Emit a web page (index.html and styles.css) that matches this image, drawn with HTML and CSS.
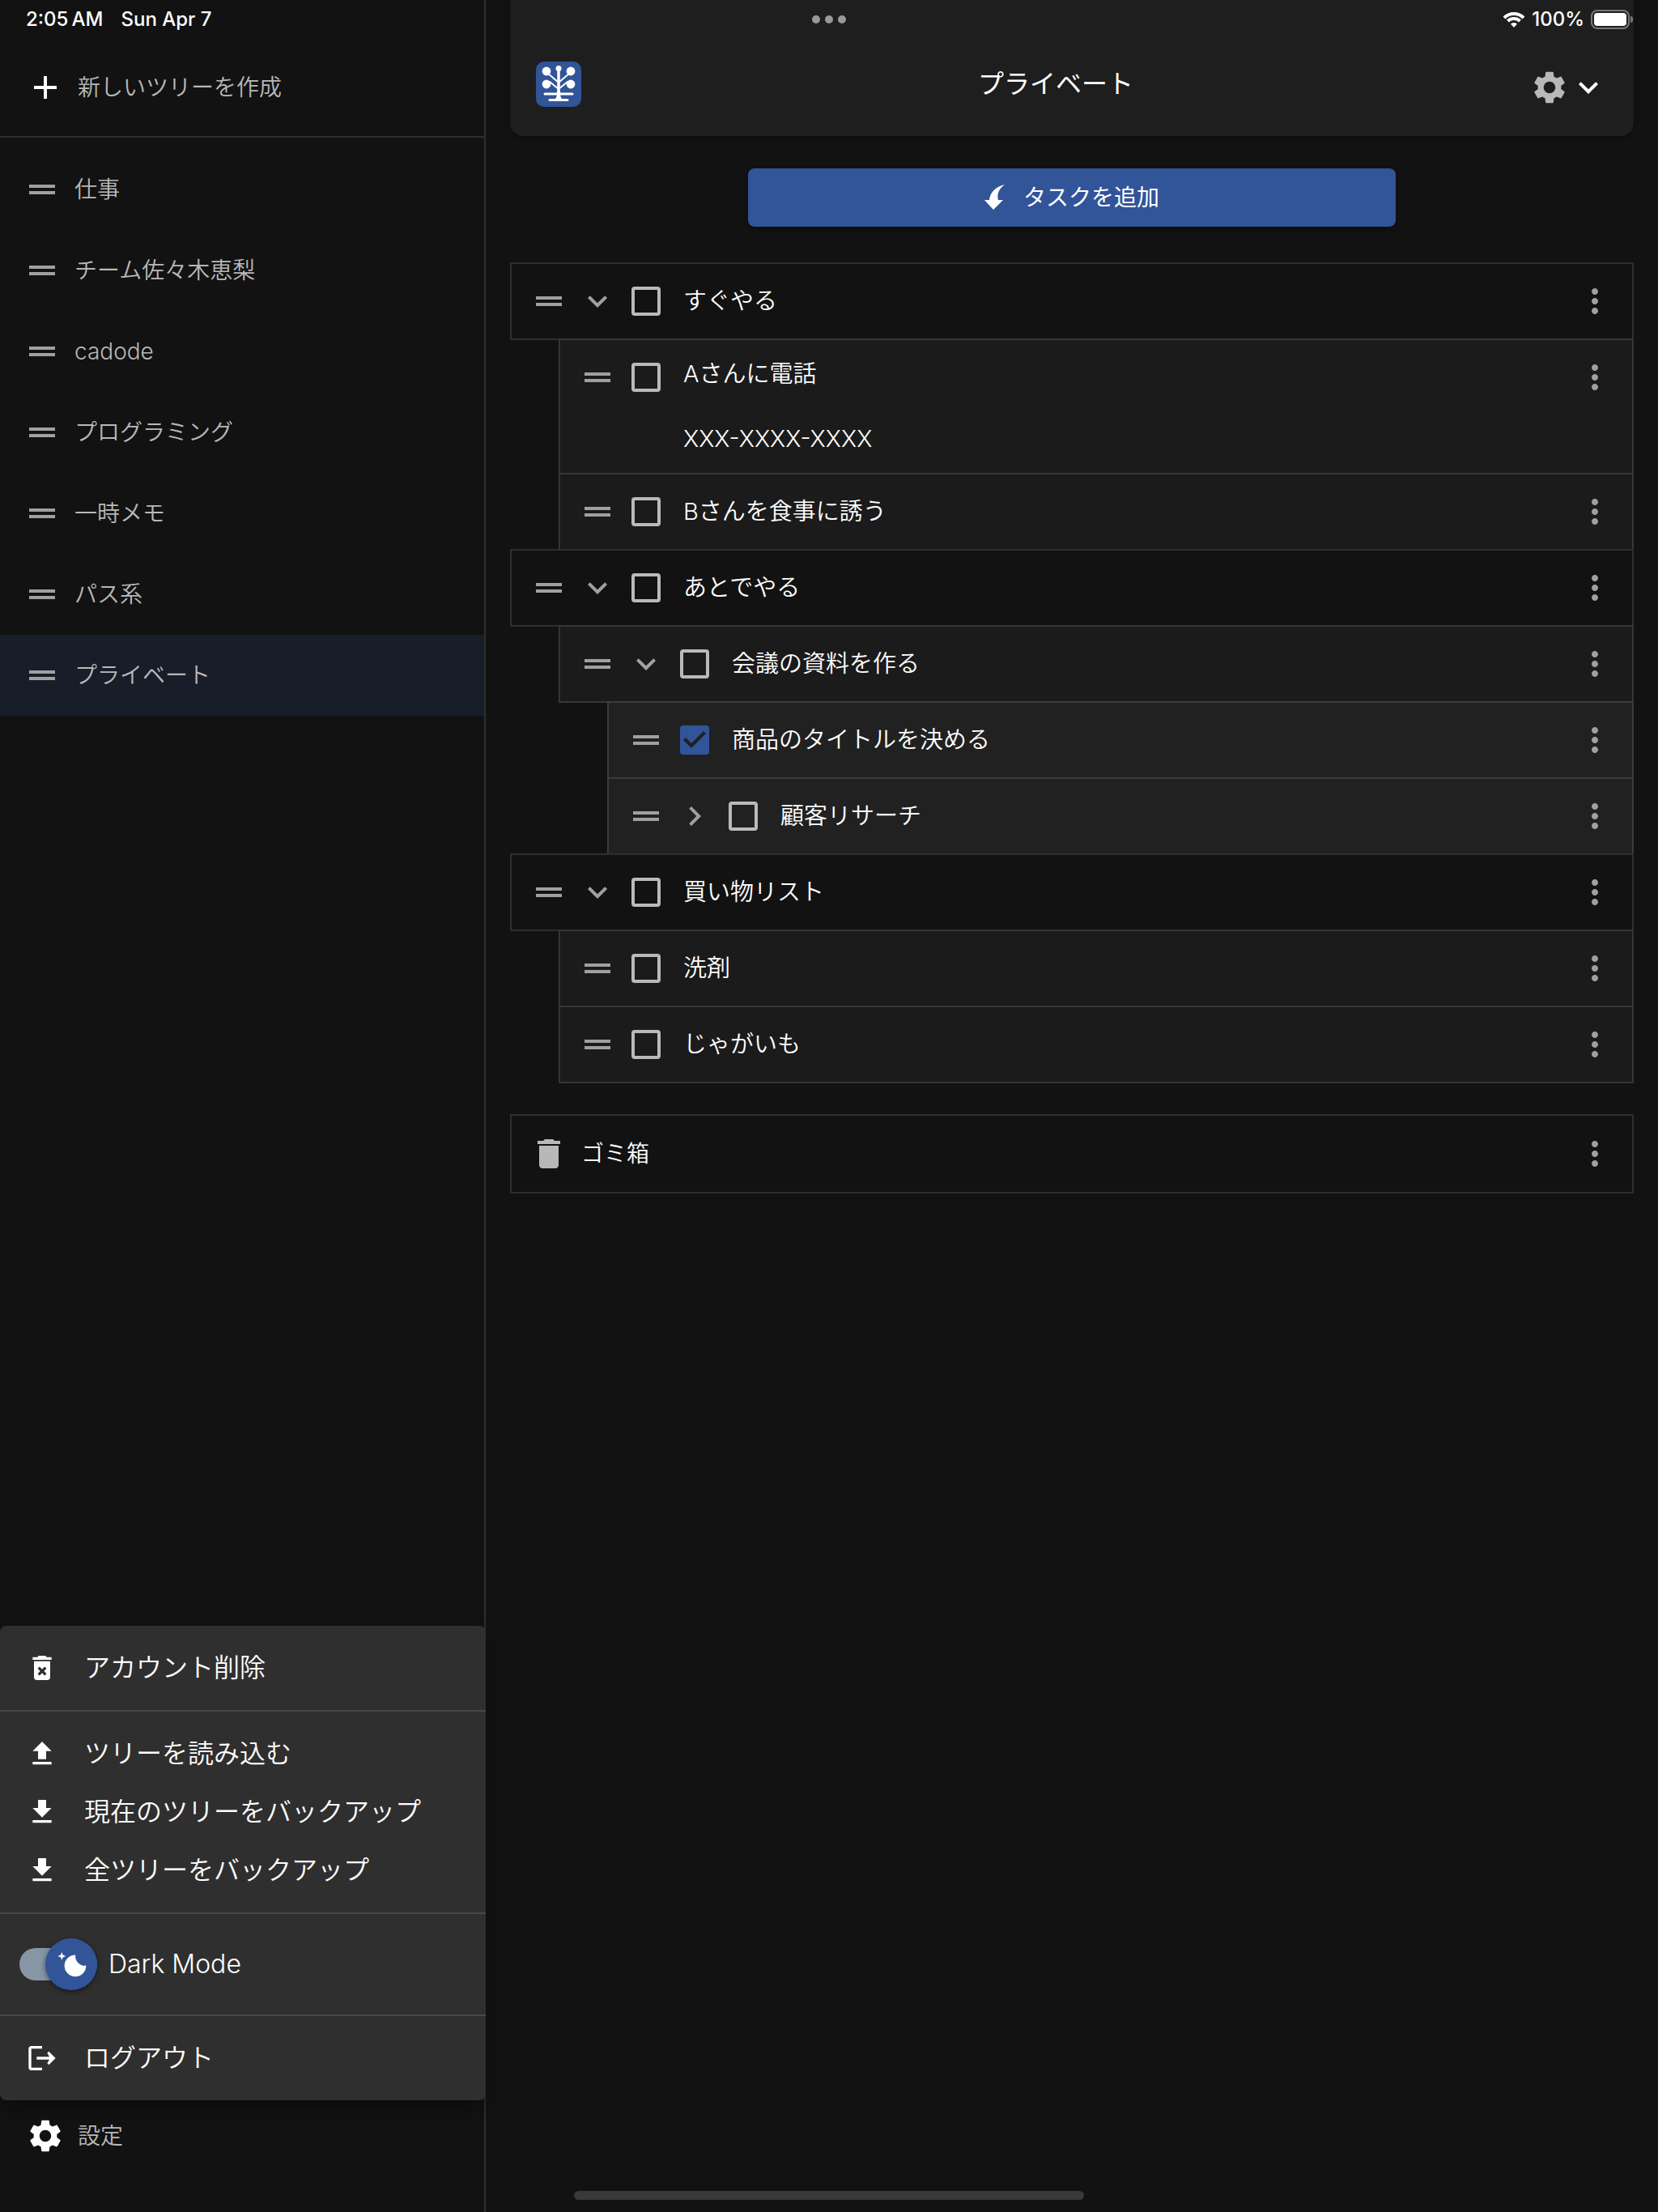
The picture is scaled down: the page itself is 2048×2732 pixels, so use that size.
FILE: index.html
```html
<!DOCTYPE html>
<html lang="ja">
<head>
<meta charset="UTF-8">
<meta name="viewport" content="width=device-width, initial-scale=1.0">
<title>プライベート</title>
<link rel="stylesheet" href="styles.css">
</head>
<body>
  <!-- アイコン -->
  <svg class="sprite" aria-hidden="true">
    <symbol id="add" viewBox="0 0 24 24"><path d="M19 13h-6v6h-2v-6H5v-2h6V5h2v6h6z"/></symbol>
    <symbol id="handle" viewBox="0 0 24 24"><path d="M20 9H4v2h16V9zM4 15h16v-2H4v2z"/></symbol>
    <symbol id="more" viewBox="0 0 24 24"><path d="M12 8c1.1 0 2-.9 2-2s-.9-2-2-2-2 .9-2 2 .9 2 2 2zm0 2c-1.1 0-2 .9-2 2s.9 2 2 2 2-.9 2-2-.9-2-2-2zm0 6c-1.1 0-2 .9-2 2s.9 2 2 2 2-.9 2-2-.9-2-2-2z"/></symbol>
    <symbol id="down" viewBox="0 0 24 24"><path d="M7.41 8.59 12 13.17l4.59-4.58L18 10l-6 6-6-6z"/></symbol>
    <symbol id="right" viewBox="0 0 24 24"><path d="M8.59 16.59 13.17 12 8.59 7.41 10 6l6 6-6 6z"/></symbol>
    <symbol id="trash" viewBox="0 0 24 24"><path d="M6 19c0 1.1.9 2 2 2h8c1.1 0 2-.9 2-2V7H6v12zM19 4h-3.5l-1-1h-5l-1 1H5v2h14V4z"/></symbol>
    <symbol id="trash-x" viewBox="0 0 24 24"><path fill-rule="evenodd" d="M6 7v12c0 1.1.9 2 2 2h8c1.1 0 2-.9 2-2V7zM8.700 12.500 10.100 11.100 12 13l1.900-1.900 1.400 1.400-1.900 1.900 1.900 1.900-1.400 1.400-1.900-1.900-1.900 1.900-1.400-1.400 1.900-1.900zM19 4h-3.500l-1-1h-5l-1 1H5v2h14z"/></symbol>
    <symbol id="upload" viewBox="0 0 24 24"><path d="M5 20h14v-2H5v2zm0-10h4v6h6v-6h4l-7-7-7 7z"/></symbol>
    <symbol id="download" viewBox="0 0 24 24"><path d="M19 9h-4V3H9v6H5l7 7 7-7zM5 18v2h14v-2H5z"/></symbol>
    <symbol id="logout" viewBox="0 0 24 24"><path d="M4 3h8v2H4v14h8v2H4c-1.1 0-2-.9-2-2V5c0-1.1.9-2 2-2z"/><path d="M17 7l5 5-5 5-1.200-1.200 1.600-2.800H8v-2h9.400l-1.600-2.800z"/></symbol>
    <symbol id="gear" viewBox="0 0 24 24"><path d="M19.14 12.94c.04-.3.06-.61.06-.94 0-.32-.02-.64-.07-.94l2.03-1.58c.18-.14.23-.41.12-.61l-1.92-3.32c-.12-.22-.37-.29-.59-.22l-2.39.96c-.5-.38-1.030-.7-1.620-.94l-.36-2.540c-.04-.24-.24-.41-.48-.41h-3.840c-.24 0-.43.17-.47.41l-.36 2.540c-.59.24-1.130.57-1.620.94l-2.390-.96c-.22-.08-.47 0-.59.22L2.740 8.870c-.12.21-.08.47.12.61l2.030 1.580c-.05.3-.09.63-.09.94s.02.64.07.94l-2.030 1.580c-.18.14-.23.41-.12.61l1.920 3.320c.12.22.37.29.59.22l2.390-.96c.5.38 1.030.7 1.620.94l.36 2.540c.05.24.24.41.48.41h3.840c.24 0 .44-.17.47-.41l.36-2.540c.59-.24 1.130-.56 1.620-.94l2.390.96c.22.08.47 0 .59-.22l1.920-3.320c.12-.22.07-.47-.12-.61l-2.010-1.580zM12 15.600c-1.980 0-3.600-1.620-3.600-3.600s1.620-3.600 3.600-3.600 3.600 1.620 3.600 3.600-1.620 3.600-3.600 3.600z"/></symbol>
  </svg>

  <div class="statusbar">
    <span>2:05&thinsp;AM</span>
    <span class="date">Sun Apr 7</span>
    <div class="dots"><i></i><i></i><i></i></div>
    <svg class="wifi" viewBox="0 0 28 20" aria-hidden="true">
      <path d="M2 8a17 17 0 0 1 24 0M6.500 12a11 11 0 0 1 15 0" fill="none" stroke="#fff" stroke-width="4"/>
      <path d="M10 15.500a6 6 0 0 1 8 0l-4 4.500z"/>
    </svg>
    <span>100%</span>
    <div class="battery"><i></i></div>
  </div>

  <aside class="sidebar">
    <button class="new-tree"><svg class="icon"><use href="#add"/></svg>新しいツリーを作成</button>
    <ul class="trees">
      <li><a href="#"><svg class="icon"><use href="#handle"/></svg>仕事</a></li>
      <li><a href="#"><svg class="icon"><use href="#handle"/></svg>チーム佐々木恵梨</a></li>
      <li><a href="#"><svg class="icon"><use href="#handle"/></svg>cadode</a></li>
      <li><a href="#"><svg class="icon"><use href="#handle"/></svg>プログラミング</a></li>
      <li><a href="#"><svg class="icon"><use href="#handle"/></svg>一時メモ</a></li>
      <li><a href="#"><svg class="icon"><use href="#handle"/></svg>パス系</a></li>
      <li><a href="#" class="selected"><svg class="icon"><use href="#handle"/></svg>プライベート</a></li>
    </ul>
    <div class="sidebar-footer">
      <div class="menu">
        <div class="menu-group">
          <button><svg class="icon"><use href="#trash-x"/></svg>アカウント削除</button>
        </div>
        <div class="menu-group">
          <button><svg class="icon"><use href="#upload"/></svg>ツリーを読み込む</button>
          <button><svg class="icon"><use href="#download"/></svg>現在のツリーをバックアップ</button>
          <button><svg class="icon"><use href="#download"/></svg>全ツリーをバックアップ</button>
        </div>
        <div class="menu-group">
          <label class="dark-mode">
            <span class="switch">
              <input type="checkbox" checked>
              <svg class="thumb" viewBox="0 0 20 20" aria-hidden="true"><path d="M4.200 2.500l-.7 1.800-1.800.7 1.800.7.7 1.800.6-1.800L6.700 5l-1.900-.7-.6-1.800zm15 8.300a6.700 6.700 0 1 1-6.600-6.600 5.800 5.800 0 0 0 6.600 6.600z"/></svg>
            </span>
            Dark Mode
          </label>
        </div>
        <div class="menu-group">
          <button><svg class="icon"><use href="#logout"/></svg>ログアウト</button>
        </div>
      </div>
      <button class="settings"><svg class="icon"><use href="#gear"/></svg>設定</button>
    </div>
  </aside>

  <main>
    <header>
      <svg class="logo" viewBox="0 0 56 56" aria-hidden="true">
        <rect width="56" height="56" rx="10" fill="#325498"/>
        <g fill="#fff">
          <circle cx="28" cy="8.500" r="3.500"/>
          <circle cx="13" cy="12" r="5.400"/>
          <circle cx="43" cy="12" r="5.400"/>
          <circle cx="13" cy="28" r="5.400"/>
          <circle cx="43" cy="28" r="5.400"/>
          <path d="M26.200 36h3.600l.6 7 2 4h-8.800l2-4z"/>
        </g>
        <g stroke="#fff" stroke-linecap="round" fill="none">
          <path d="M28 9v34" stroke-width="3.500"/>
          <path d="M14 14l14 12 14-12M17 25l11 9 11-9" stroke-width="2"/>
          <path d="M11 40h34M17 47.500h22" stroke-width="3"/>
        </g>
      </svg>
      <h1>プライベート</h1>
      <button class="tools" aria-label="設定"><svg class="icon"><use href="#gear"/></svg><svg class="icon arrow"><use href="#down"/></svg></button>
    </header>

    <button class="add-task">
      <svg viewBox="0 0 32 32" aria-hidden="true"><path d="M25 0C15 2 7 9 6 19H0l11 12 12-12h-6C15 12 18 5 25 0z"/></svg>
      タスクを追加
    </button>

    <ul class="tasks">
      <li>
        <div class="row">
          <svg class="icon"><use href="#handle"/></svg>
          <button aria-label="閉じる"><svg class="icon"><use href="#down"/></svg></button>
          <input type="checkbox" id="t1">
          <label for="t1">すぐやる</label>
          <button aria-label="メニュー"><svg class="icon"><use href="#more"/></svg></button>
        </div>
        <ul>
          <li>
            <div class="row">
              <svg class="icon"><use href="#handle"/></svg>
              <input type="checkbox" id="t2">
              <label for="t2">Aさんに電話<br><br>XXX-XXXX-XXXX</label>
              <button aria-label="メニュー"><svg class="icon"><use href="#more"/></svg></button>
            </div>
          </li>
          <li>
            <div class="row">
              <svg class="icon"><use href="#handle"/></svg>
              <input type="checkbox" id="t3">
              <label for="t3">Bさんを食事に誘う</label>
              <button aria-label="メニュー"><svg class="icon"><use href="#more"/></svg></button>
            </div>
          </li>
        </ul>
      </li>
      <li>
        <div class="row">
          <svg class="icon"><use href="#handle"/></svg>
          <button aria-label="閉じる"><svg class="icon"><use href="#down"/></svg></button>
          <input type="checkbox" id="t4">
          <label for="t4">あとでやる</label>
          <button aria-label="メニュー"><svg class="icon"><use href="#more"/></svg></button>
        </div>
        <ul>
          <li>
            <div class="row">
              <svg class="icon"><use href="#handle"/></svg>
              <button aria-label="閉じる"><svg class="icon"><use href="#down"/></svg></button>
              <input type="checkbox" id="t5">
              <label for="t5">会議の資料を作る</label>
              <button aria-label="メニュー"><svg class="icon"><use href="#more"/></svg></button>
            </div>
            <ul>
              <li>
                <div class="row">
                  <svg class="icon"><use href="#handle"/></svg>
                  <input type="checkbox" id="t6" checked>
                  <label for="t6">商品のタイトルを決める</label>
                  <button aria-label="メニュー"><svg class="icon"><use href="#more"/></svg></button>
                </div>
              </li>
              <li>
                <div class="row">
                  <svg class="icon"><use href="#handle"/></svg>
                  <button aria-label="開く"><svg class="icon"><use href="#right"/></svg></button>
                  <input type="checkbox" id="t7">
                  <label for="t7">顧客リサーチ</label>
                  <button aria-label="メニュー"><svg class="icon"><use href="#more"/></svg></button>
                </div>
              </li>
            </ul>
          </li>
        </ul>
      </li>
      <li>
        <div class="row">
          <svg class="icon"><use href="#handle"/></svg>
          <button aria-label="閉じる"><svg class="icon"><use href="#down"/></svg></button>
          <input type="checkbox" id="t8">
          <label for="t8">買い物リスト</label>
          <button aria-label="メニュー"><svg class="icon"><use href="#more"/></svg></button>
        </div>
        <ul>
          <li>
            <div class="row">
              <svg class="icon"><use href="#handle"/></svg>
              <input type="checkbox" id="t9">
              <label for="t9">洗剤</label>
              <button aria-label="メニュー"><svg class="icon"><use href="#more"/></svg></button>
            </div>
          </li>
          <li>
            <div class="row">
              <svg class="icon"><use href="#handle"/></svg>
              <input type="checkbox" id="t10">
              <label for="t10">じゃがいも</label>
              <button aria-label="メニュー"><svg class="icon"><use href="#more"/></svg></button>
            </div>
          </li>
        </ul>
      </li>
    </ul>

    <div class="trash">
      <svg class="icon"><use href="#trash"/></svg>
      <span>ゴミ箱</span>
      <button aria-label="メニュー"><svg class="icon"><use href="#more"/></svg></button>
    </div>
  </main>

  <div class="home-indicator"></div>
</body>
</html>
```

FILE: styles.css
```css
* {
box-sizing: border-box;
}

body {
font-family: Inter, "Noto Sans CJK JP", sans-serif;
font-weight: 350;
font-size: 28px;
line-height: 40px;
margin: 0;
display: flex;
min-height: 100vh;
background-color: #121212;
color: #fff;
}

ul {
list-style: none;
margin: 0;
padding: 0;
}

button {
font: inherit;
color: inherit;
background: none;
border: none;
padding: 0;
cursor: pointer;
display: flex;
align-items: center;
}

.sprite {
display: none;
}

svg {
fill: currentColor;
flex: none;
}

.icon {
width: 48px;
height: 48px;
display: block;
}

/* status bar */
.statusbar {
position: absolute;
top: 0;
left: 0;
right: 0;
height: 48px;
padding: 0 35px 0 32px;
display: flex;
align-items: center;
font-weight: 500;
font-size: 24px;
}

.statusbar .date {
margin-left: 22px;
flex: 1;
}

.dots {
position: absolute;
left: 50%;
transform: translateX(-50%);
display: flex;
gap: 6px;
}

.dots i {
width: 10px;
height: 10px;
border-radius: 50%;
background-color: #999;
}

.wifi {
width: 28px;
height: 20px;
margin-right: 8px;
}

.battery {
position: relative;
width: 48px;
height: 24px;
margin-left: 8px;
padding: 2px;
border: 2px solid #777;
border-radius: 8px;
}

.battery i {
display: block;
height: 16px;
border-radius: 4px;
background-color: #fff;
}

.battery::after {
content: "";
position: absolute;
right: -6px;
top: 6px;
width: 3px;
height: 8px;
border-radius: 0 4px 4px 0;
background-color: #777;
}

/* sidebar */
.sidebar {
width: 600px;
flex: none;
display: flex;
flex-direction: column;
padding-top: 48px;
border-right: 2px solid #2e2e2e;
color: #b8b8b8;
}

.new-tree {
height: 122px;
padding-left: 32px;
gap: 16px;
border-bottom: 2px solid #2e2e2e;
}

.new-tree .icon, .settings .icon {
color: #fff;
}

.trees {
flex: 1;
padding-top: 14px;
}

.trees a {
display: flex;
align-items: center;
gap: 16px;
height: 100px;
padding-left: 28px;
color: inherit;
text-decoration: none;
}

.trees .icon {
color: #a0a0a0;
}

.trees .selected {
background-color: #171e2a;
}

.sidebar-footer {
position: relative;
padding-bottom: 50px;
}

.settings {
width: 100%;
height: 88px;
padding-left: 32px;
gap: 16px;
}

/* settings menu */
.menu {
position: absolute;
bottom: 100%;
left: 0;
right: -2px;
border-radius: 8px;
background-color: #2f2f2f;
box-shadow: 0 10px 20px rgba(0, 0, 0, 0.3);
color: #fff;
font-size: 32px;
}

.menu-group {
padding: 16px 0;
}

.menu-group + .menu-group {
border-top: 2px solid #484848;
}

.menu button {
width: 100%;
height: 72px;
padding-left: 32px;
gap: 32px;
}

.menu .icon {
width: 40px;
height: 40px;
}

.dark-mode {
display: flex;
align-items: center;
height: 92px;
padding-left: 24px;
gap: 14px;
cursor: pointer;
}

.switch {
position: relative;
display: flex;
}

.switch input {
appearance: none;
width: 96px;
height: 40px;
margin: 0;
border-radius: 20px;
background-color: #8796a5;
}

.thumb {
position: absolute;
right: 0;
top: -12px;
width: 64px;
height: 64px;
padding: 12px;
border-radius: 50%;
background-color: #325498;
box-shadow: 0 2px 6px rgba(0, 0, 0, 0.5);
}

/* main */
main {
flex: 1;
padding: 0 30px 60px;
}

header {
display: flex;
align-items: center;
height: 168px;
padding: 48px 32px 8px;
border-radius: 0 0 16px 16px;
background-color: #1e1e1e;
box-shadow: 0 2px 6px rgba(0, 0, 0, 0.3);
}

.logo {
width: 56px;
height: 56px;
}

h1 {
flex: 1;
margin: 0;
text-align: center;
font-size: 32px;
font-weight: 400;
}

.tools {
padding-top: 8px;
color: #b8b8b8;
}

.tools .arrow {
color: #fff;
}

.add-task {
justify-content: center;
gap: 16px;
width: 100%;
max-width: 800px;
height: 72px;
margin: 40px auto 44px;
border-radius: 8px;
background-color: #325498;
box-shadow: 0 3px 6px rgba(0, 0, 0, 0.3);
font-weight: 400;
}

.add-task svg {
width: 32px;
height: 32px;
}

/* tasks */
.tasks {
padding-top: 2px;
}

.tasks ul {
margin-left: 60px;
}

.row {
display: flex;
align-items: flex-start;
gap: 12px;
min-height: 96px;
margin-top: -2px;
padding: 22px;
border: 2px solid #2e2e2e;
background-color: #121212;
color: #a0a0a0;
}

.tasks ul .row {
border-color: #363636;
background-color: #1b1b1b;
}

.tasks ul ul .row {
border-color: #3c3c3c;
background-color: #212121;
}

.row label {
flex: 1;
align-self: center;
margin-left: 10px;
font-size: 29px;
color: #fff;
}

.row input {
appearance: none;
flex: none;
width: 36px;
height: 36px;
margin: 6px;
border: 4px solid #bababa;
border-radius: 4px;
}

.row input:checked {
border: none;
background-color: #325498;
}

.row input:checked::before {
content: "";
display: block;
height: 36px;
background-color: #212121;
clip-path: polygon(14px 28px, 4px 18px, 7px 15px, 14px 22px, 29px 7px, 32px 10px);
}

.trash {
display: flex;
align-items: center;
gap: 16px;
height: 98px;
margin-top: 38px;
padding: 0 22px;
border: 2px solid #2e2e2e;
color: #b8b8b8;
}

.trash span {
flex: 1;
color: #fff;
}

.trash button {
color: #a0a0a0;
}

.home-indicator {
position: absolute;
left: 50%;
bottom: 15px;
transform: translateX(-50%);
width: 630px;
height: 11px;
border-radius: 6px;
background-color: #393939;
}
```
